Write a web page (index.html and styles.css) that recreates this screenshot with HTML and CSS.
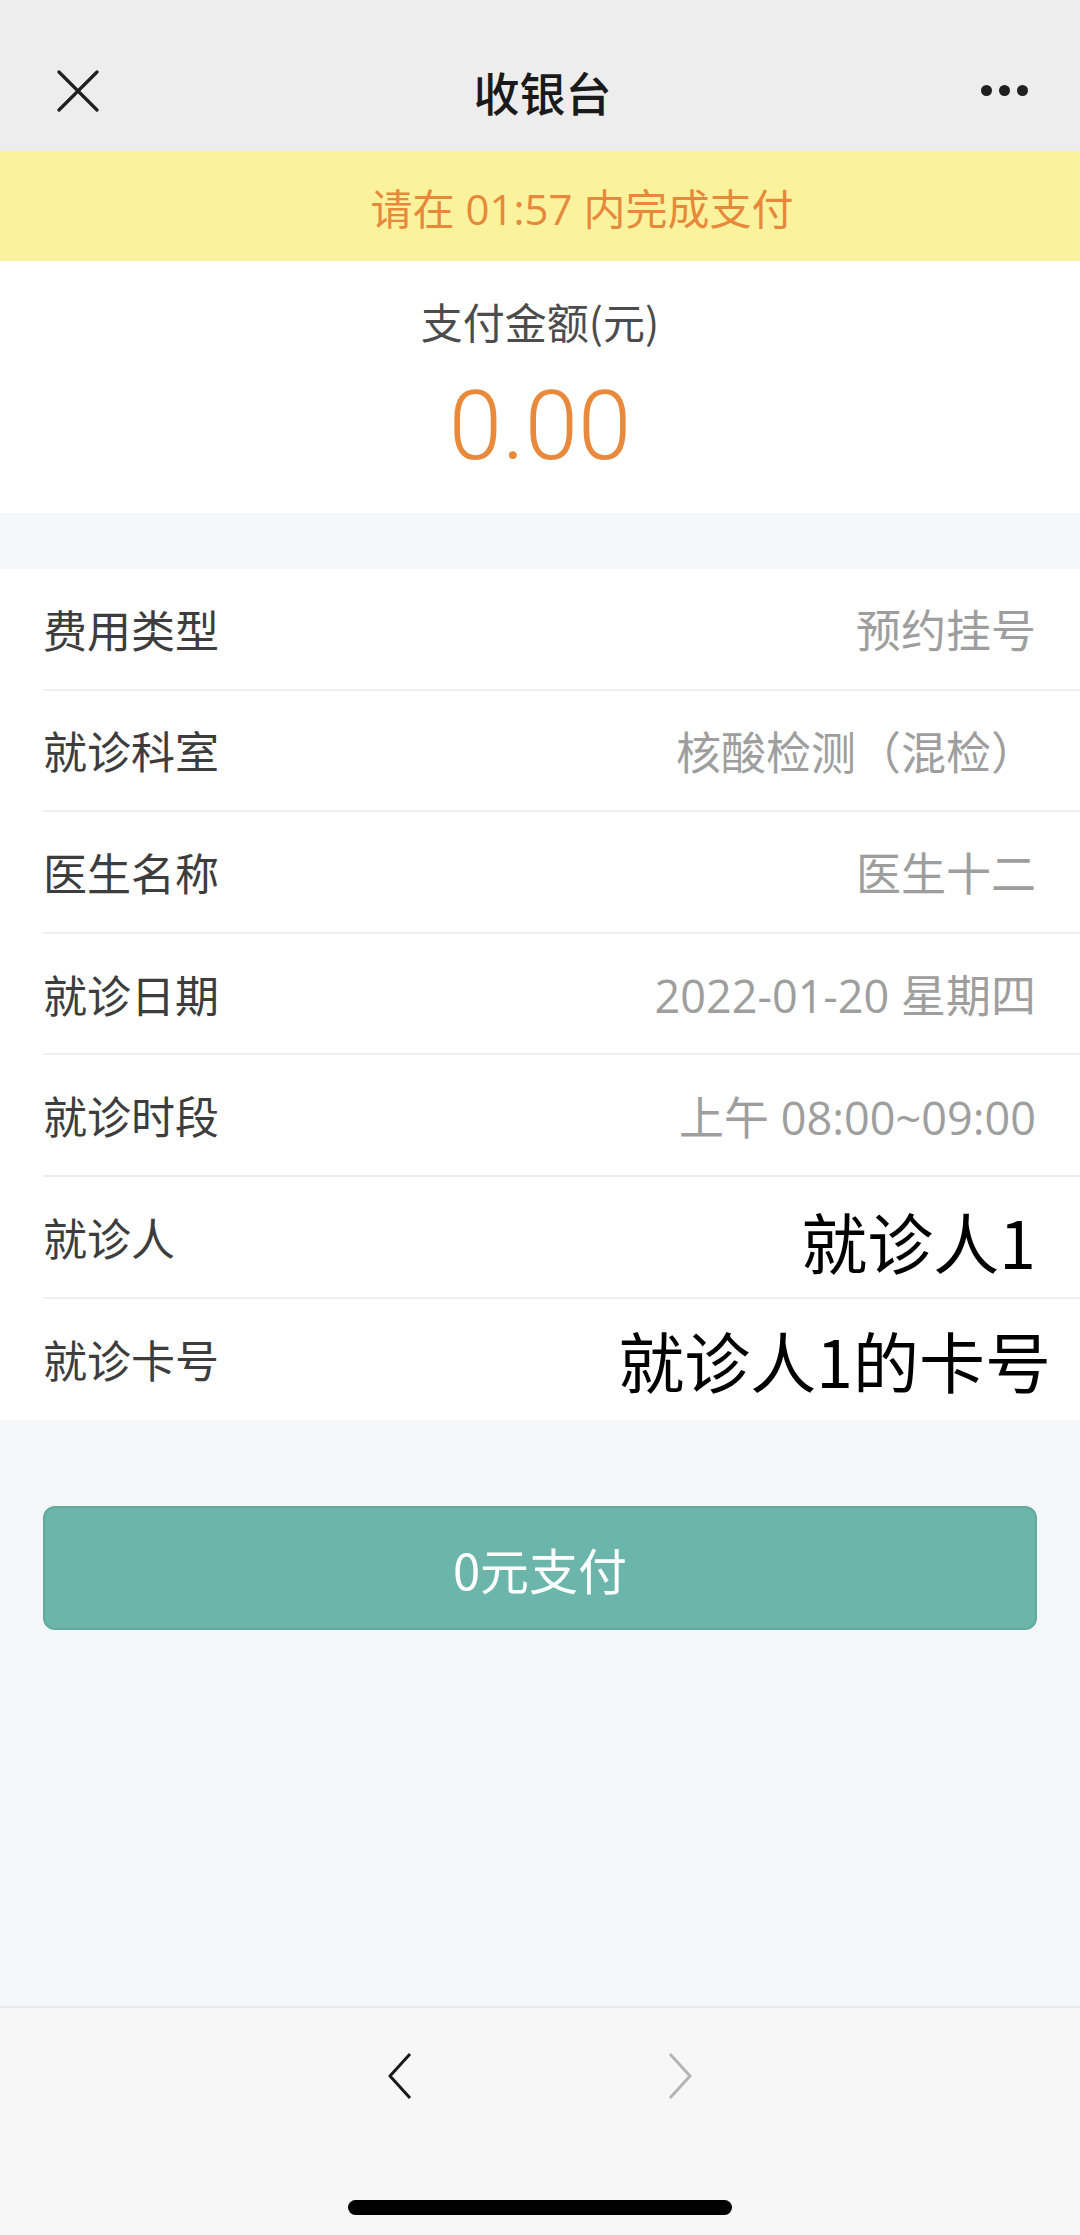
FILE: index.html
```html
<!DOCTYPE html>
<html lang="zh-CN">
<head>
    <meta charset="UTF-8">
    <meta name="viewport" content="width=device-width, initial-scale=1.0">
    <title>收银台</title>
    <link rel="stylesheet" href="styles.css">
</head>
<body>

<div class="page">
    <div class="nav-bar">
        <div class="nav-left">
            <svg class="close-icon" width="42" height="42" viewBox="0 0 42 42">
                <path d="M2 2 L40 40 M40 2 L2 40" stroke="#1f1f1f" stroke-width="3.2" stroke-linecap="round" fill="none"/>
            </svg>
        </div>
        <div class="nav-title">收银台</div>
        <div class="nav-right">
            <span class="dot"></span>
            <span class="dot"></span>
            <span class="dot"></span>
        </div>
    </div>

    <div class="countdown">请在 01:57 内完成支付</div>

    <div class="amount-box">
        <div class="amount-label">支付金额(元)</div>
        <div class="amount-value">0.00</div>
    </div>

    <ul class="info-list">
        <li><span class="info-label">费用类型</span><span class="info-value">预约挂号</span></li>
        <li><span class="info-label">就诊科室</span><span class="info-value">核酸检测（混检）</span></li>
        <li><span class="info-label">医生名称</span><span class="info-value">医生十二</span></li>
        <li><span class="info-label">就诊日期</span><span class="info-value">2022-01-20 星期四</span></li>
        <li><span class="info-label">就诊时段</span><span class="info-value">上午 08:00~09:00</span></li>
        <li><span class="info-label">就诊人</span><span class="info-value big">就诊人1</span></li>
        <li><span class="info-label">就诊卡号</span><span class="info-value big wide">就诊人1的卡号</span></li>
    </ul>

    <button class="pay-btn">0元支付</button>

    <div class="spacer"></div>

    <div class="bottom-bar">
        <div class="arrows">
            <svg width="24" height="48" viewBox="0 0 24 48">
                <path d="M22 2 L2 24 L22 46" stroke="#1a1a1a" stroke-width="3" fill="none" stroke-linejoin="round"/>
            </svg>
            <svg width="24" height="48" viewBox="0 0 24 48">
                <path d="M2 2 L22 24 L2 46" stroke="#b5b5b5" stroke-width="3" fill="none" stroke-linejoin="round"/>
            </svg>
        </div>
        <div class="home-indicator"></div>
    </div>
</div>

</body>
</html>
```

FILE: styles.css
```css
body {
    margin: 0;
    padding: 0;
    background-color: #f4f6f7;
    font-family: "Noto Sans CJK SC", "Noto Sans", sans-serif;
}

.page {
    display: flex;
    flex-direction: column;
    min-height: 100vh;
}

.nav-bar {
    box-sizing: border-box;
    height: 151px;
    background-color: #ededed;
    display: grid;
    grid-template-columns: 1fr auto 1fr;
    align-items: center;
    padding: 30px 52px 0 57px;
}

.nav-left {
    display: flex;
    align-items: center;
}

.nav-title {
    font-size: 46px;
    font-weight: 500;
    color: #1a1a1a;
}

.nav-right {
    display: flex;
    justify-content: flex-end;
    align-items: center;
    gap: 7px;
}

.dot {
    width: 11px;
    height: 11px;
    border-radius: 50%;
    background-color: #1f1f1f;
}

.countdown {
    box-sizing: border-box;
    height: 110px;
    background-color: #fbf29e;
    color: #e6893a;
    font-family: "Open Sans", "Noto Sans CJK SC", sans-serif;
    font-size: 42px;
    display: flex;
    align-items: center;
    justify-content: center;
    padding-left: 84px;
}

.amount-box {
    background-color: #fff;
    padding: 30px 0 32px;
    text-align: center;
}

.amount-label {
    font-size: 42px;
    line-height: 60px;
    color: #4c4c4c;
}

.amount-value {
    margin-top: 20px;
    font-family: Roboto, sans-serif;
    font-weight: 300;
    font-size: 96px;
    line-height: 110px;
    color: #e8893b;
}

.info-list {
    list-style-type: none;
    margin: 56px 0 0;
    padding: 0 0 0 43px;
    background-color: #fff;
}

.info-list li {
    box-sizing: border-box;
    height: 121.6px;
    display: flex;
    align-items: center;
    justify-content: space-between;
    padding-right: 44px;
    border-bottom: 2px solid #efefef;
}

.info-list li:last-child {
    border-bottom: none;
}

.info-label {
    font-size: 44px;
    color: #3d3d3d;
}

.info-value {
    font-family: "Open Sans", "Noto Sans CJK SC", sans-serif;
    font-size: 45px;
    color: #9e9e9e;
}

.info-value.big {
    font-family: "Noto Sans CJK SC", sans-serif;
    font-size: 66px;
    color: #000;
    margin-top: 6px;
}

.info-value.wide {
    margin-right: -15px;
    margin-top: 0;
}

.pay-btn {
    margin: 86px 43px 0;
    height: 124px;
    background-color: #6bb5ab;
    border: 2px solid #62a99f;
    border-radius: 12px;
    color: #fff;
    font-family: "Noto Sans CJK SC", sans-serif;
    font-size: 49px;
}

.spacer {
    flex: 1;
}

.bottom-bar {
    height: 229px;
    box-sizing: border-box;
    background-color: #f7f7f7;
    border-top: 2px solid #e8e9ea;
    padding-top: 44px;
    display: flex;
    flex-direction: column;
    align-items: center;
}

.arrows {
    display: flex;
    gap: 256px;
    height: 48px;
}

.home-indicator {
    margin-top: 100px;
    width: 384px;
    height: 15px;
    border-radius: 8px;
    background-color: #000;
}
```
